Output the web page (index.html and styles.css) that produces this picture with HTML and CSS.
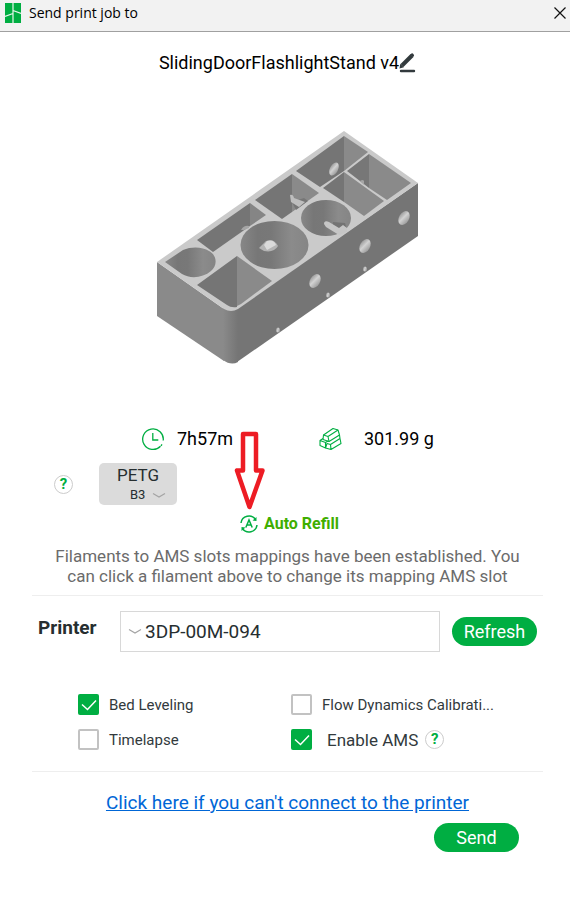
FILE: index.html
```html
<!DOCTYPE html>
<html lang="en">
<head>
  <meta charset="UTF-8">
  <title>Send print job to</title>
  <link rel="stylesheet" href="styles.css">
</head>
<body>
  <header class="titlebar">
    <svg class="app-logo" width="16" height="20" viewBox="0 0 16 20">
      <rect width="16" height="20" fill="#00ae42"/>
      <path d="M8 0v20M0 13.500l8-3M8 7.500l8 3" stroke="#e8f5ec" stroke-width="1.200" fill="none"/>
    </svg>
    <h1 class="titlebar-text">Send print job to</h1>
    <button class="close-button" type="button" aria-label="Close">
      <svg width="12" height="12" viewBox="0 0 12 12"><path d="M.5.5l11 11M11.5.5l-11 11" stroke="#111" stroke-width="1.2"/></svg>
    </button>
  </header>

  <main class="content">
    <div class="job-name">
      <span>SlidingDoorFlashlightStand v4</span>
      <button class="edit-button" type="button" aria-label="Rename">
        <svg width="17" height="20" viewBox="0 0 17 20">
          <path d="M3 12.500L13 2.500" stroke="#323a3d" stroke-width="4"/>
          <path d="M.5 15.400l.8-4.600 3.600 3.400zM11.300 1.400l1.200-1q1.200-.4 2.200 1t-.3 2.200l-.4.600z" fill="#323a3d"/>
          <path d="M2 18h13" stroke="#323a3d" stroke-width="2.400" stroke-linecap="round"/>
        </svg>
      </button>
    </div>

    <!-- plate preview -->
    <svg class="preview" width="262" height="236" viewBox="157 130 262 236">
      <defs>
        <linearGradient id="corner"><stop offset="0" stop-color="#8a8a8a"/><stop offset="1" stop-color="#757575"/></linearGradient>
        <linearGradient id="bore"><stop offset="0" stop-color="#878787"/><stop offset=".25" stop-color="#777"/><stop offset=".45" stop-color="#787878"/><stop offset=".75" stop-color="#8b8b8b"/><stop offset="1" stop-color="#858585"/></linearGradient>
        <linearGradient id="hole" x1="0" y1="0" x2="1" y2=".4"><stop offset="0" stop-color="#8c8c8c"/><stop offset=".55" stop-color="#d2d2d2"/><stop offset="1" stop-color="#a5a5a5"/></linearGradient>
      </defs>
      <path d="M157 262L224 309V361L157 316z" fill="#8a8a8a"/>
      <path d="M418 183V236L237 362V308z" fill="#757575"/>
      <path d="M223 308H238V362Q231 366 223 360z" fill="url(#corner)"/>
      <path d="M157 262L344 131L418 183L238 309Q231 313 224 309z" fill="#cacaca"/>
      <path d="M165 262L183 250C192 246 203 247 209 251C218 256 217 266 211 271C203 278 190 279 182 274z" fill="url(#bore)"/>
      <path d="M197 285L237 256V307Q231 308 227 305z" fill="#757575"/>
      <path d="M237 256L272 281L241 304L237 306z" fill="#8a8a8a"/>
      <path d="M197 240L250 203V226L213 252z" fill="#757575"/>
      <path d="M250 203L266 215L250 226z" fill="#858585"/>
      <path d="M241 230q3-5 8-4v2l-5 2z" fill="#a5a5a5"/>
      <path d="M255 200L292 174V212L282 219z" fill="#757575"/>
      <path d="M292 174L319 193L292 212z" fill="#8a8a8a"/>
      <path d="M292 202l12-4 4 3-12 9z" fill="#767676"/>
      <path d="M290 195q3-1 4 3l11 4-6 5-8-5z" fill="#bebebe"/>
      <path d="M296 171L344 136V171L320 187z" fill="#757575"/>
      <path d="M344 136L368 152L344 171z" fill="#8a8a8a"/>
      <path d="M347 171L369 154V188z" fill="#777"/>
      <path d="M369 154L411 183L387 200L369 188z" fill="#8a8a8a"/>
      <path d="M323 188L344 172V202z" fill="#757575"/>
      <path d="M344 172L384 201L364 216L344 202z" fill="#8a8a8a"/>
      <ellipse cx="334" cy="169" rx="4" ry="7" transform="rotate(28 334 169)" fill="url(#hole)"/>
      <path d="M360 181q3-2 4 0v4z" fill="#a5a5a5"/>
      <ellipse cx="274.500" cy="245" rx="34" ry="24" fill="url(#bore)"/>
      <path d="M259 248l7-7q8-3 12 5-4 7-14 5z" fill="#b4b4b4"/>
      <path d="M264 245l3-4q7-2 9 4l-9 5z" fill="#dadada"/>
      <ellipse cx="326" cy="218" rx="25" ry="18" fill="url(#bore)"/>
      <path d="M333 222l12 1 2 7-14-2z" fill="#737373"/>
      <path d="M324 224q0-4 5-2l10 6 4-3 4 3v4l-8 3-13-8z" fill="#c6c6c6"/>
      <g fill="url(#hole)">
        <ellipse cx="315" cy="281" rx="5" ry="7.500" transform="rotate(30 315 281)"/>
        <ellipse cx="365" cy="246" rx="5" ry="7.500" transform="rotate(30 365 246)"/>
        <ellipse cx="404" cy="218" rx="5" ry="7.500" transform="rotate(30 404 218)"/>
        <ellipse cx="278" cy="330" rx="2" ry="2.500"/>
        <ellipse cx="328" cy="295" rx="2" ry="2.500"/>
        <ellipse cx="365" cy="269" rx="2" ry="2.500"/>
      </g>
    </svg>

    <div class="stats">
      <div class="stat">
        <svg width="24" height="24" viewBox="0 0 24 24" fill="none" stroke="#00ae42" stroke-width="1.300">
          <path d="M19.500 19.200A10.300 10.300 0 1 1 22.200 13.500M21 17.300l-1 1.500M11.800 6v7h5.500"/>
        </svg>
        <span>7h57m</span>
      </div>
      <div class="stat">
        <svg width="24" height="24" viewBox="0 0 24 24" fill="none" stroke="#00ae42" stroke-width="1.100" stroke-linejoin="round">
          <path d="M4.500 8L14 1.500l5 1.500 1.500 5L10 14.500l-6-2z"/>
          <path d="M4.500 8L9 9.500l1 5M9 9.500L19 3"/>
          <path d="M4 11.500L1 13.500v5L6.500 21V15.500L1 13.500M6.500 15.500L9 14"/>
          <path d="M6.500 21l1.500-4.500 3.500 1L21 11.500l-.5-3.500M11.500 17.500L12 22.500l10-6-1-5M12 22.500L6.500 21"/>
        </svg>
        <span>301.99 g</span>
      </div>
    </div>

    <div class="filaments">
      <button class="help" type="button">?</button>
      <button class="filament" type="button">
        <span>PETG</span>
        <span class="slot">B3
          <svg width="14" height="7" viewBox="0 0 14 7"><path d="M1 1.500l6 3.500 6-3.500" fill="none" stroke="#a4a4a4" stroke-width="1.200"/></svg>
        </span>
      </button>
    </div>

    <div class="refill">
      <svg width="18" height="18" viewBox="0 0 18 18" fill="none" stroke="#00ae42" stroke-width="1.500">
        <path d="M1 8a8 8 0 0 1 14.500-3.500M17 10A8 8 0 0 1 2.500 13.500"/>
        <path d="M12.500 5.500l4 .5V2zM5.500 12.500l-4-.5v4z" fill="#00ae42" stroke="none"/>
        <path d="M5.800 12.500L9 5l3.200 7.500M7 10h4"/>
      </svg>
      <span>Auto Refill</span>
      <svg class="pointer" width="32" height="82" viewBox="0 0 32 82">
        <path d="M9 4h13v36.500h6.500L15.500 77 3 40.500h6z" fill="#fff" stroke="#ed1c24" stroke-width="4.500" stroke-linejoin="round"/>
      </svg>
    </div>

    <p class="message">Filaments to AMS slots mappings have been established. You can click a filament above to change its mapping AMS slot</p>

    <div class="printer-row">
      <label class="printer-label" for="printer">Printer</label>
      <div class="select-box">
        <svg width="14" height="7" viewBox="0 0 14 7"><path d="M1 1.500l6 3.500 6-3.500" fill="none" stroke="#a4a4a4" stroke-width="1.200"/></svg>
        <select id="printer">
          <option>3DP-00M-094</option>
        </select>
      </div>
      <button class="pill" type="button">Refresh</button>
    </div>

    <div class="options">
      <div class="option">
        <input type="checkbox" id="bed" checked>
        <label for="bed">Bed Leveling</label>
      </div>
      <div class="option">
        <input type="checkbox" id="flow">
        <label for="flow">Flow Dynamics Calibrati...</label>
      </div>
      <div class="option">
        <input type="checkbox" id="timelapse">
        <label for="timelapse">Timelapse</label>
      </div>
      <div class="option option-ams">
        <input type="checkbox" id="ams" checked>
        <label for="ams">Enable AMS</label>
        <button class="help" type="button">?</button>
      </div>
    </div>

    <div class="footer">
      <a class="connect-link" href="#">Click here if you can't connect to the printer</a>
      <button class="pill send" type="button">Send</button>
    </div>
  </main>
</body>
</html>
```
FILE: styles.css
```css
* {
  box-sizing: border-box;
}

body {
  margin: 0;
  background: #fff;
  color: #000;
  font-family: Roboto, "Liberation Sans", sans-serif;
  font-size: 18px;
  line-height: 20px;
}

button {
  font: inherit;
  border: none;
  padding: 0;
  background: none;
  cursor: pointer;
}

svg {
  display: block;
  flex: none;
}

.titlebar {
  display: flex;
  align-items: center;
  height: 32px;
  padding: 1px 4px 7px 5px;
  background: #f2f2f2;
  border-bottom: 1px solid #a0a0a0;
}

.titlebar-text {
  flex: 1;
  margin: 0 0 0 8px;
  font-family: "Open Sans", sans-serif;
  font-size: 14px;
  font-weight: normal;
}

.content {
  padding: 19px 27px 20px 32px;
}

.job-name {
  display: flex;
  justify-content: center;
  align-items: center;
  height: 24px;
}

.preview {
  margin: 55px auto 0;
}

.stats {
  display: grid;
  grid-template-columns: 178px auto;
  padding-left: 109px;
  margin-top: 61px;
}

.stat {
  display: flex;
  align-items: center;
  height: 24px;
  gap: 12px;
}

.stat + .stat {
  gap: 21px;
}

.filaments {
  display: flex;
  align-items: center;
  gap: 26px;
  margin-top: 12px;
  padding-left: 22px;
}

.help {
  width: 19px;
  height: 19px;
  border: 1px solid #ccc;
  border-radius: 50%;
  color: #00ae42;
  font-size: 15px;
  font-weight: bold;
  line-height: 17px;
}

.filament {
  width: 78px;
  height: 42px;
  padding-top: 2px;
  border-radius: 5px;
  background: #dbdbdb;
  color: #262e30;
  font-size: 17px;
}

.slot {
  display: flex;
  align-items: center;
  gap: 7px;
  padding-left: 31px;
  font-size: 13px;
}

.refill {
  position: relative;
  display: flex;
  align-items: center;
  justify-content: center;
  gap: 6px;
  margin-top: 9px;
  padding-left: 4px;
  color: #3fae00;
  font-size: 16px;
  font-weight: bold;
}

/* red arrow pointing at the refill icon */
.pointer {
  position: absolute;
  left: 202px;
  bottom: 22px;
}

.message {
  margin: 12px 0 0;
  padding: 0 16px 9px;
  border-bottom: 1px solid #eee;
  color: #6b6b6b;
  font-size: 17px;
  text-align: center;
}

.printer-row {
  display: flex;
  align-items: center;
  gap: 12px;
  margin-top: 15px;
  padding: 0 6px;
  color: #262e30;
}

.printer-label {
  width: 70px;
  padding-bottom: 8px;
  font-size: 19px;
  font-weight: bold;
}

.select-box {
  flex: 1;
  display: flex;
  align-items: center;
  height: 41px;
  padding: 0 7px;
  border: 1px solid #d8d8d8;
}

.select-box select {
  flex: 1;
  height: 100%;
  padding: 0 0 0 3px;
  border: none;
  appearance: none;
  background: none;
  color: #262e30;
  font: inherit;
  font-size: 19px;
}

.pill {
  width: 85px;
  height: 29px;
  border-radius: 15px;
  background: #00ae42;
  color: #fff;
}

.options {
  display: grid;
  grid-template-columns: 213px auto;
  row-gap: 14px;
  margin-top: 42px;
  padding: 0 0 21px 46px;
  border-bottom: 1px solid #eee;
  color: #323a3d;
  font-size: 15px;
}

.option {
  display: flex;
  align-items: center;
  gap: 10px;
  white-space: nowrap;
}

.option input {
  flex: none;
  width: 21px;
  height: 21px;
  margin: 0;
  border: 2px solid #c2c2c2;
  border-radius: 2px;
  appearance: none;
}

.option input:checked {
  border: none;
  background: #00ae42 url("data:image/svg+xml,%3Csvg xmlns='http://www.w3.org/2000/svg' viewBox='0 0 21 21'%3E%3Cpath d='M4 10.500l5.500 5L18 6.500' fill='none' stroke='%23fff' stroke-width='1.500'/%3E%3C/svg%3E");
}

.option-ams {
  gap: 7px;
}

.option-ams label {
  padding-left: 8px;
  font-size: 17px;
}

.footer {
  display: flex;
  flex-direction: column;
  align-items: center;
  margin-top: 21px;
}

.connect-link {
  font-size: 19px;
  color: #0066d6;
}

.send {
  align-self: flex-end;
  margin: 10px 24px 0 0;
}
```
